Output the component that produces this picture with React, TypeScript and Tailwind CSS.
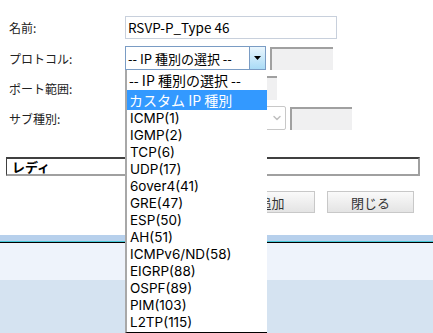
import { ChevronDown } from "lucide-react";

const font = "font-['Segoe_UI','Noto_Sans_CJK_JP',sans-serif]";

const options = [
  "ICMP(1)",
  "IGMP(2)",
  "TCP(6)",
  "UDP(17)",
  "6over4(41)",
  "GRE(47)",
  "ESP(50)",
  "AH(51)",
  "ICMPv6/ND(58)",
  "EIGRP(88)",
  "OSPF(89)",
  "PIM(103)",
  "L2TP(115)",
];

function SunkenBox({ className }: { className: string }) {
  return (
    <div
      className={`bg-[#f0f0f1] border-t-2 border-l-2 border-[#a0a0a0] ${className}`}
    />
  );
}

export default function App() {
  return (
    <div
      className={`relative w-[433px] h-[333px] overflow-hidden bg-white text-[13px] leading-[17px] text-[#222] ${font}`}
    >
      {/* Form */}
      <div className="flex flex-col pt-[16px]">
        <div className="flex items-center h-[23px]">
          <span className="w-[125px] pl-[9px] text-[12px]">名前:</span>
          <div className="w-[212px] h-[23px] border border-[#c8d0dc] px-[2px] flex items-center text-[13.5px] text-black">
            RSVP-P_Type 46
          </div>
        </div>

        <div className="flex items-center h-[24px] mt-[7px]">
          <span className="w-[125px] pl-[9px] text-[12px]">プロトコル:</span>
          <div className="w-[141px] h-[24px] border border-[#7a9cc4] flex items-center">
            <span className="flex-1 pl-[2px] text-[13px] text-black">
              -- IP 種別の選択 --
            </span>
            <div className="w-[16px] h-full border-l border-[#7a9cc4] bg-gradient-to-b from-[#eaf6fd] to-[#a9dbf6] flex items-center justify-center">
              <svg width="7" height="4" viewBox="0 0 7 4">
                <path d="M0 0h7L3.5 4z" fill="#000" />
              </svg>
            </div>
          </div>
          <SunkenBox className="w-[63px] h-[23px] ml-[4px]" />
        </div>

        <div className="flex items-center h-[24px] mt-[6px]">
          <span className="w-[125px] pl-[9px] text-[12px]">ポート範囲:</span>
          <SunkenBox className="w-[50px] h-[24px] ml-[102px]" />
        </div>

        <div className="flex items-center h-[24px] mt-[6px]">
          <span className="w-[125px] pl-[9px] text-[12px]">サブ種別:</span>
          <div className="w-[161px] h-[24px] border border-[#c8c8c8] rounded-[2px] flex items-center justify-end pr-[2px]">
            <ChevronDown className="w-[12px] h-[12px] text-[#c0c0c0]" strokeWidth={3} />
          </div>
          <SunkenBox className="w-[62px] h-[23px] ml-[4px]" />
        </div>
      </div>

      {/* Status */}
      <div className="mx-[6px] mt-[27px] w-[414px] h-[19px] border-t-2 border-l border-t-[#404040] border-l-[#404040] border-r-2 border-b-2 border-r-[#a0a0a0] border-b-[#a0a0a0] flex items-center pl-[5px]">
        <span className="text-[13px] font-bold text-black">レディ</span>
      </div>

      {/* Buttons */}
      <div className="flex justify-end gap-[12px] pr-[19px] mt-[15px]">
        <button className="w-[87px] h-[22px] border border-[#c8c8c8] bg-gradient-to-b from-[#fafafa] to-[#e4e4e4] text-[13px] text-[#333]">
          追加
        </button>
        <button className="w-[87px] h-[22px] border border-[#c8c8c8] bg-gradient-to-b from-[#fafafa] to-[#e4e4e4] text-[13px] text-[#333]">
          閉じる
        </button>
      </div>

      {/* Bottom band */}
      <div className="mt-[22px] flex flex-col">
        <div className="h-[6px] bg-[#b7d0ec]" />
        <div className="h-[1px] bg-[#46c8d8]" />
        <div className="h-[1px] bg-black" />
        <div className="h-[37px] bg-[#eef3fb]" />
        <div className="h-[60px] bg-[#d5e3f1]" />
      </div>

      {/* Open dropdown list */}
      <div className="absolute left-[125px] top-[70px] w-[142px] h-[263px] bg-white border-l-2 border-[#a8a8a8] border-b border-b-black text-[14px] text-black">
        <div className="pl-[2px] h-[20px] leading-[20px] text-[14px]">-- IP 種別の選択 --</div>
        <div className="pl-[2px] h-[20px] leading-[20px] text-[14px] bg-[#3399ff] text-white">
          カスタム IP 種別
        </div>
        {options.map((o) => (
          <div
            key={o}
            className="pl-[3px] h-[17px] leading-[17px] font-['Inter',sans-serif] text-[13.5px]"
          >
            {o}
          </div>
        ))}
      </div>
    </div>
  );
}
